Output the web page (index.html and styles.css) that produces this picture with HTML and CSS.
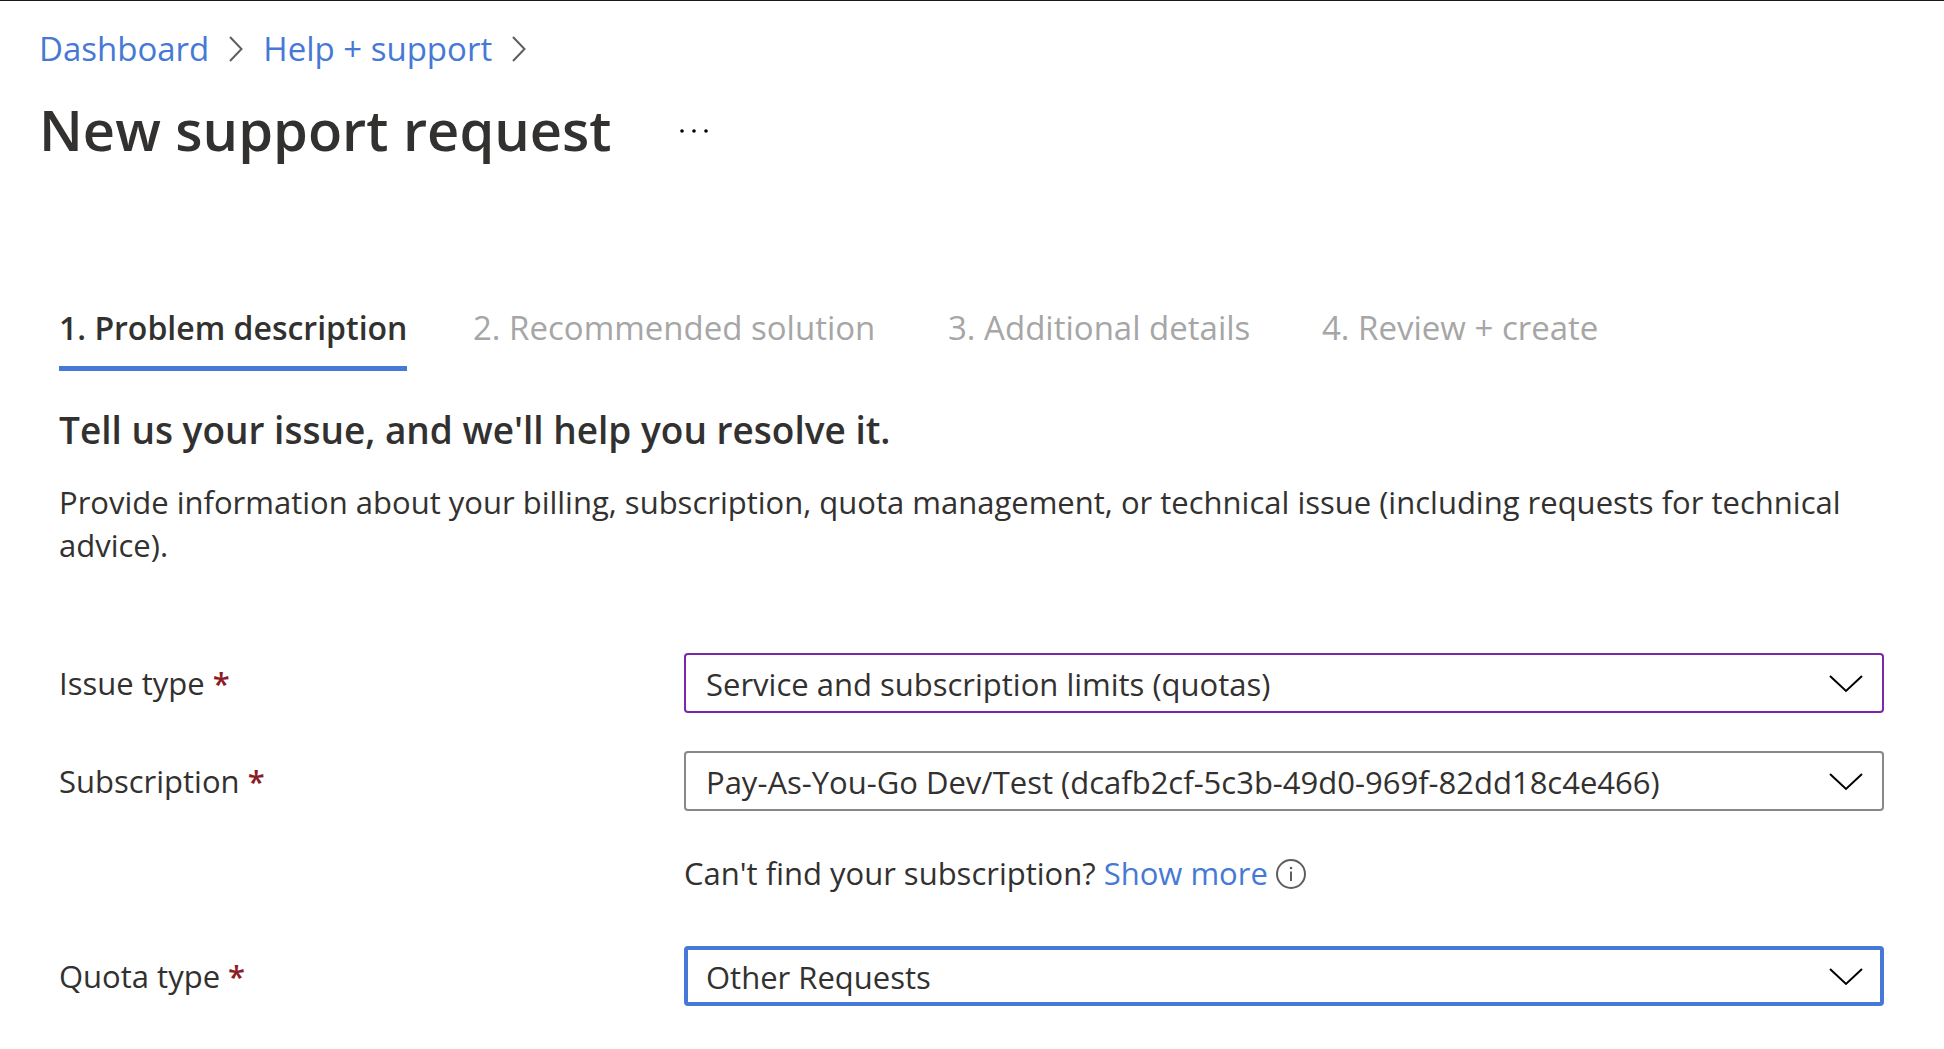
FILE: index.html
```html
<!DOCTYPE html>
<html lang="en">
<head>
  <meta charset="utf-8">
  <meta name="viewport" content="width=device-width, initial-scale=1">
  <title>New support request</title>
  <link rel="stylesheet" href="styles.css">
</head>
<body>
  <header class="header">
    <nav class="breadcrumb" aria-label="Breadcrumb">
      <a class="link" href="#dashboard">Dashboard</a>
      <svg class="breadcrumb-chevron" viewBox="0 0 14 26" aria-hidden="true"><path d="M1 1 12.5 13 1 25"/></svg>
      <a class="link" href="#help">Help + support</a>
      <svg class="breadcrumb-chevron" viewBox="0 0 14 26" aria-hidden="true"><path d="M1 1 12.5 13 1 25"/></svg>
    </nav>
    <div class="title-row">
      <h1 class="title">New support request</h1>
      <button class="more" type="button" aria-label="More actions">
        <svg class="more-icon" viewBox="0 0 28 4" aria-hidden="true"><circle cx="2" cy="2" r="1.8"/><circle cx="14" cy="2" r="1.8"/><circle cx="26" cy="2" r="1.8"/></svg>
      </button>
    </div>
  </header>

  <main class="content">
    <div class="tabs" role="tablist">
      <button class="tab tab-active" type="button" role="tab" aria-selected="true">1. Problem description</button>
      <button class="tab" type="button" role="tab" aria-selected="false" disabled>2. Recommended solution</button>
      <button class="tab" type="button" role="tab" aria-selected="false" disabled>3. Additional details</button>
      <button class="tab" type="button" role="tab" aria-selected="false" disabled>4. Review + create</button>
    </div>

    <h2 class="subtitle">Tell us your issue, and we'll help you resolve it.</h2>
    <p class="intro">Provide information about your billing, subscription, quota management, or technical issue (including requests for technical advice).</p>

    <form class="form">
      <div class="field">
        <label class="label" for="issue-type">Issue type <span class="required">*</span></label>
        <div class="dropdown">
          <select class="select select-edited" id="issue-type"><option>Service and subscription limits (quotas)</option></select>
          <svg class="dropdown-chevron" viewBox="0 0 34 18" aria-hidden="true"><path d="M1 1 17 16 33 1"/></svg>
        </div>
      </div>
      <div class="field">
        <label class="label" for="subscription">Subscription <span class="required">*</span></label>
        <div class="dropdown">
          <select class="select" id="subscription"><option>Pay-As-You-Go Dev/Test (dcafb2cf-5c3b-49d0-969f-82dd18c4e466)</option></select>
          <svg class="dropdown-chevron" viewBox="0 0 34 18" aria-hidden="true"><path d="M1 1 17 16 33 1"/></svg>
        </div>
        <div class="hint">
          <span>Can't find your subscription? <a class="link" href="#subscriptions">Show more</a></span>
          <svg class="info" viewBox="0 0 30 30" role="img" aria-label="Information"><circle class="info-ring" cx="15" cy="15" r="14"/><path class="info-stem" d="M15 12.5V22"/><circle class="info-dot" cx="15" cy="9" r="1.3"/></svg>
        </div>
      </div>
      <div class="field">
        <label class="label" for="quota-type">Quota type <span class="required">*</span></label>
        <div class="dropdown">
          <select class="select select-focused" id="quota-type"><option>Other Requests</option></select>
          <svg class="dropdown-chevron" viewBox="0 0 34 18" aria-hidden="true"><path d="M1 1 17 16 33 1"/></svg>
        </div>
      </div>
    </form>
  </main>
</body>
</html>
```
FILE: styles.css
```css
:root {
  --text: #323130;
  --blue: #4679d5;
  --disabled: #a6a6a6;
}

* {
  box-sizing: border-box;
}

body {
  margin: 0;
  border-top: 1px solid #1b1a19;
  background: #fff;
  color: var(--text);
  font: 31px/43px "Open Sans", "Noto Sans", sans-serif;
}

h1,
h2,
p {
  margin: 0;
}

button {
  padding: 0;
  border: 0;
  background: none;
  font-family: inherit;
}

.link {
  color: var(--blue);
  text-decoration: none;
}

.header {
  padding: 26px 39px 0;
}

.breadcrumb {
  display: flex;
  align-items: center;
  gap: 20px;
  font-size: 33px;
  line-height: 44px;
}

.breadcrumb-chevron {
  width: 14px;
  height: 26px;
  fill: none;
  stroke: #605e5c;
  stroke-width: 2;
}

.title-row {
  display: flex;
  align-items: center;
  gap: 68px;
  margin-top: 20px;
}

.title {
  font-size: 56px;
  font-weight: 600;
  line-height: 76px;
}

.more {
  display: flex;
  padding-top: 4px;
}

.more-icon {
  width: 28px;
  height: 4px;
  fill: #000;
}

.content {
  padding: 139px 60px 40px 59px;
}

.tabs {
  display: grid;
  grid-template-columns: 414px 475px 374px auto;
  justify-items: start;
}

.tab {
  padding-bottom: 16px;
  border-bottom: 5px solid transparent;
  color: var(--disabled);
  font-size: 33px;
  line-height: 44px;
  white-space: nowrap;
}

.tab-active {
  border-bottom-color: var(--blue);
  color: var(--text);
  font-size: 32px;
  font-weight: 600;
}

.subtitle {
  margin-top: 35px;
  font-size: 37px;
  font-weight: 600;
  line-height: 48px;
}

.intro {
  margin-top: 27px;
}

.form {
  display: grid;
  gap: 38px;
  margin-top: 86px;
}

.field {
  display: grid;
  grid-template-columns: 625px 1fr;
}

.label {
  line-height: 60px;
}

.required {
  color: #8b1c26;
  font-weight: 600;
}

.dropdown {
  display: grid;
  align-items: center;
}

.select,
.dropdown-chevron {
  grid-area: 1 / 1;
}

.select {
  width: 100%;
  height: 60px;
  padding: 2px 64px 0 20px;
  border: 2px solid #8a8886;
  border-radius: 4px;
  appearance: none;
  background: #fff;
  color: inherit;
  font: inherit;
}

.select-edited {
  border-color: #7a28a8;
}

.select-focused {
  padding-left: 18px;
  border: 4px solid var(--blue);
}

.dropdown-chevron {
  justify-self: end;
  width: 34px;
  height: 18px;
  margin: 2px 21px 0 0;
  fill: none;
  stroke: #000;
  stroke-width: 2;
  pointer-events: none;
}

.hint {
  display: flex;
  grid-column: 2;
  align-items: center;
  gap: 8px;
  padding: 41px 0 13px;
}

.info {
  width: 30px;
  height: 30px;
}

.info-ring,
.info-stem {
  fill: none;
  stroke: #605e5c;
  stroke-width: 2;
}

.info-dot {
  fill: #605e5c;
}
```
